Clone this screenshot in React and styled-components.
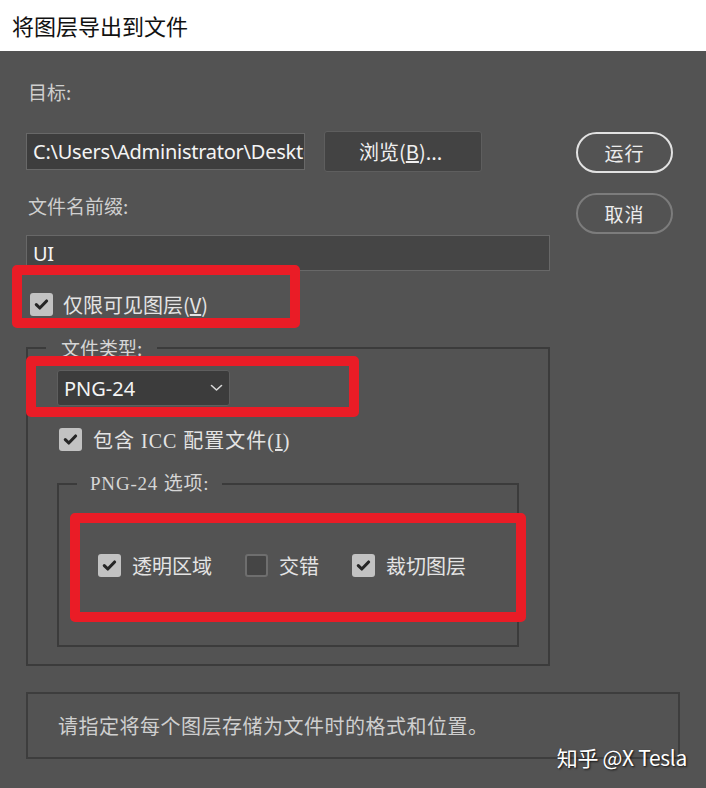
import React from "react";
import styled, { createGlobalStyle } from "styled-components";

const GlobalStyle = createGlobalStyle`
  html, body {
    margin: 0;
    padding: 0;
    background: #535353;
  }
  body {
    font-family: "Noto Sans", "Noto Sans CJK SC", sans-serif;
  }
`;

const SERIF = `"Liberation Serif", "Noto Sans CJK SC", serif`;

const Window = styled.div`
  width: 706px;
  height: 788px;
  overflow: hidden;
  display: flex;
  flex-direction: column;
`;

const TitleBar = styled.div`
  height: 51px;
  flex: none;
  background: #ffffff;
  color: #111;
  font-family: "Noto Sans CJK SC", sans-serif;
  font-size: 22px;
  display: flex;
  align-items: center;
  padding-left: 12px;
  padding-bottom: 2px;
  box-sizing: border-box;
`;

const Body = styled.div`
  position: relative;
  flex: 1;
  background: #535353;
  padding-left: 26px;
  display: flex;
  flex-direction: column;
`;

const TopArea = styled.div`
  display: flex;
`;

const LeftCol = styled.div`
  width: 524px;
  display: flex;
  flex-direction: column;
`;

const RightCol = styled.div`
  width: 97px;
  margin-left: 26px;
  padding-top: 81px;
  display: flex;
  flex-direction: column;
  gap: 20px;
`;

const Label = styled.div`
  margin-top: ${(p) => p.$top}px;
  font-family: "Noto Sans CJK SC", sans-serif;
  font-size: 19px;
  line-height: 24px;
  color: #cfcfcf;
  padding-left: 2px;
`;

const PathRow = styled.div`
  margin-top: 27px;
  height: 41px;
  display: flex;
  align-items: center;
  gap: 19px;
`;

const TextField = styled.div`
  box-sizing: border-box;
  width: ${(p) => p.$w}px;
  height: ${(p) => p.$h}px;
  margin-top: ${(p) => p.$top || 0}px;
  background: ${(p) => p.$bg};
  border: 1.5px solid #686868;
  color: #f4f4f4;
  font-size: 20px;
  letter-spacing: -0.25px;
  padding-left: 6px;
  display: flex;
  align-items: center;
  white-space: nowrap;
  overflow: hidden;
`;

const Button = styled.div`
  box-sizing: border-box;
  width: 158px;
  height: 41px;
  background: #434343;
  border: 1.5px solid #5e5e5e;
  border-radius: 3px;
  color: #f0f0f0;
  font-family: "Noto Sans CJK SC", sans-serif;
  font-size: 20px;
  display: flex;
  align-items: center;
  padding-left: 34px;
`;

const PillButton = styled.div`
  box-sizing: border-box;
  height: 41px;
  border-radius: 21px;
  border: 2px solid ${(p) => (p.$primary ? "#e2e2e2" : "#7c7c7c")};
  color: #ececec;
  font-family: "Noto Sans CJK SC", sans-serif;
  font-size: 19px;
  display: flex;
  align-items: center;
  justify-content: center;
  letter-spacing: 1px;
`;

const CheckRow = styled.label`
  display: flex;
  align-items: center;
  gap: ${(p) => p.$gap || 10}px;
  margin-top: ${(p) => p.$top || 0}px;
  margin-left: ${(p) => p.$left || 0}px;
  height: 23px;
  color: #e4e4e4;
  font-family: ${(p) => (p.$serif ? SERIF : `"Noto Sans CJK SC", sans-serif`)};
  font-size: 20px;
  letter-spacing: ${(p) => p.$spacing || 0}px;
  white-space: nowrap;
`;

const Box = styled.span`
  box-sizing: border-box;
  width: 23px;
  height: 23px;
  flex: none;
  border-radius: 3px;
  background: ${(p) => (p.$checked ? "#c2c2c2" : "#454545")};
  border: ${(p) => (p.$checked ? "none" : "2px solid #6e6e6e")};
  display: flex;
  align-items: center;
  justify-content: center;
`;

const Fieldset = styled.fieldset`
  box-sizing: border-box;
  margin: ${(p) => p.$margin};
  padding: 0;
  border: 2px solid #3b3b3b;
  min-width: 0;
`;

const Legend = styled.legend`
  margin-left: ${(p) => p.$left}px;
  padding: 0 ${(p) => p.$pad}px;
  font-family: ${(p) => (p.$serif ? SERIF : `"Noto Sans CJK SC", sans-serif`)};
  font-size: 19px;
  line-height: 24px;
  letter-spacing: ${(p) => p.$spacing || 0}px;
  color: #d6d6d6;
`;

const FieldBody = styled.div`
  padding: 0 0 17px 29px;
  display: flex;
  flex-direction: column;
`;

const Select = styled.div`
  box-sizing: border-box;
  width: 173px;
  height: 36px;
  margin-top: 10px;
  background: #3c3c3c;
  border: 1.5px solid #5e5e5e;
  border-radius: 3px;
  color: #f4f4f4;
  font-size: 20px;
  display: flex;
  align-items: center;
  justify-content: space-between;
  padding: 0 6px 0 6px;
`;

const OptionsRow = styled.div`
  display: flex;
  align-items: center;
  gap: 33px;
  margin: 58px 0 0 39px;
  padding-bottom: 68px;
`;

const Description = styled.div`
  box-sizing: border-box;
  width: 654px;
  height: 67px;
  margin-top: 26px;
  border: 2px solid #3d3d3d;
  padding-left: 30px;
  display: flex;
  align-items: center;
  font-family: "Noto Sans CJK SC", sans-serif;
  font-size: 20px;
  letter-spacing: 0.5px;
  color: #cfcfcf;
`;

const Highlight = styled.div`
  position: absolute;
  left: ${(p) => p.$x}px;
  top: ${(p) => p.$y - 51}px;
  width: ${(p) => p.$w}px;
  height: ${(p) => p.$h}px;
  box-sizing: border-box;
  border: 10px solid #ea1c26;
  border-radius: 5px;
  pointer-events: none;
`;

const Watermark = styled.div`
  position: absolute;
  right: 19px;
  top: ${757 - 51 - 15}px;
  font-family: "Noto Sans CJK SC", sans-serif;
  font-size: 21px;
  line-height: 30px;
  color: #ffffff;
  text-shadow: 1px 1px 2px rgba(0, 0, 0, 0.8);
  letter-spacing: -0.3px;
`;

const Check = ({ checked = true }) => (
  <Box $checked={checked}>
    {checked && (
      <svg width="15" height="15" viewBox="0 0 15 15">
        <polyline
          points="2.3,7.6 5.8,11 12.6,4"
          fill="none"
          stroke="#262626"
          strokeWidth="3.1"
          strokeLinecap="round"
          strokeLinejoin="round"
        />
      </svg>
    )}
  </Box>
);

const Chevron = () => (
  <svg width="13" height="8" viewBox="0 0 13 8">
    <polyline
      points="1.5,1.5 6.5,6 11.5,1.5"
      fill="none"
      stroke="#d8d8d8"
      strokeWidth="1.6"
      strokeLinecap="round"
      strokeLinejoin="round"
    />
  </svg>
);

export default function App() {
  return (
    <>
      <GlobalStyle />
      <Window>
        <TitleBar>将图层导出到文件</TitleBar>
        <Body>
          <TopArea>
            <LeftCol>
              <Label $top={29}>目标:</Label>
              <PathRow>
                <TextField $w={279} $h={37} $bg="#3d3d3d">
                  C:\Users\Administrator\Desktop
                </TextField>
                <Button>
                  浏览(<u>B</u>)...
                </Button>
              </PathRow>
              <Label $top={22}>文件名前缀:</Label>
              <TextField $w={524} $h={36} $top={17} $bg="#454545">
                UI
              </TextField>
              <CheckRow $top={22} $left={4} $gap={10}>
                <Check />
                <span>
                  仅限可见图层(<u>V</u>)
                </span>
              </CheckRow>
              <Fieldset $margin="20px 0 0 0">
                <Legend $left={18} $pad={15}>
                  文件类型:
                </Legend>
                <FieldBody>
                  <Select>
                    <span>PNG-24</span>
                    <Chevron />
                  </Select>
                  <CheckRow $top={22} $left={2} $gap={11} $serif $spacing={1}>
                    <Check />
                    <span>
                      包含 ICC 配置文件(<u>I</u>)
                    </span>
                  </CheckRow>
                  <Fieldset $margin="21px 29px 0 0">
                    <Legend $left={18} $pad={13} $serif $spacing={0.8}>
                      PNG-24 选项:
                    </Legend>
                    <OptionsRow>
                      <CheckRow $gap={11} $serif>
                        <Check />
                        <span>透明区域</span>
                      </CheckRow>
                      <CheckRow $gap={11} $serif>
                        <Check checked={false} />
                        <span>交错</span>
                      </CheckRow>
                      <CheckRow $gap={11} $serif>
                        <Check />
                        <span>裁切图层</span>
                      </CheckRow>
                    </OptionsRow>
                  </Fieldset>
                </FieldBody>
              </Fieldset>
            </LeftCol>
            <RightCol>
              <PillButton $primary>运行</PillButton>
              <PillButton>取消</PillButton>
            </RightCol>
          </TopArea>
          <Description>请指定将每个图层存储为文件时的格式和位置。</Description>

          <Highlight $x={12} $y={265} $w={288} $h={63} />
          <Highlight $x={26} $y={356} $w={333} $h={61} />
          <Highlight $x={70} $y={513} $w={456} $h={109} />
          <Watermark>知乎 @X Tesla</Watermark>
        </Body>
      </Window>
    </>
  );
}
